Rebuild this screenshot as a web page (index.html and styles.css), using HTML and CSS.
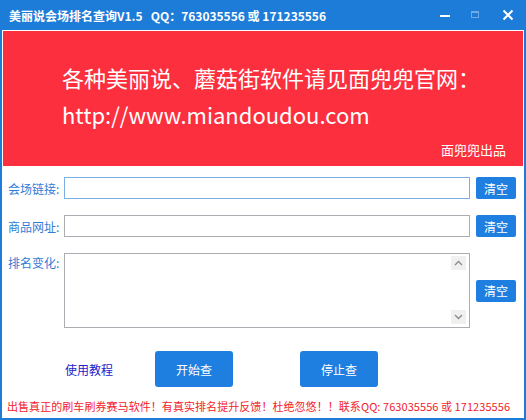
FILE: index.html
```html
<!DOCTYPE html>
<html lang="zh-CN">
<head>
<meta charset="utf-8">
<title>美丽说会场排名查询V1.5</title>
<link rel="stylesheet" href="styles.css">
</head>
<body>
<div class="window">
  <div class="titlebar">
    <span class="title">美丽说会场排名查询V1.5&nbsp;&nbsp;&nbsp;QQ：763035556 或 171235556</span>
    <div class="controls">
      <span class="ctl ctl-min"><svg width="12" height="12" viewBox="0 0 12 12"><rect x="1" y="6" width="10" height="2" fill="#fff"/></svg></span>
      <span class="ctl ctl-max"><svg width="12" height="12" viewBox="0 0 12 12"><rect x="2.5" y="2.5" width="7" height="6" fill="none" stroke="#6fa9e6" stroke-width="1"/><rect x="2.5" y="2.5" width="7" height="1.5" fill="#6fa9e6"/></svg></span>
      <span class="ctl ctl-close"><svg width="12" height="12" viewBox="0 0 12 12"><path d="M1.5 1.5 L10.5 10.5 M10.5 1.5 L1.5 10.5" stroke="#fff" stroke-width="2" fill="none"/></svg></span>
    </div>
  </div>
  <div class="client">
    <div class="banner">
      <div class="banner-line">各种美丽说、蘑菇街软件请见面兜兜官网：</div>
      <div class="banner-line">http://www.miandoudou.com</div>
      <div class="banner-credit">面兜兜出品</div>
    </div>
    <div class="form">
      <label class="label">会场链接:</label>
      <div class="field field-focus"></div>
      <button class="btn-clear">清空</button>

      <label class="label">商品网址:</label>
      <div class="field"></div>
      <button class="btn-clear">清空</button>

      <label class="label label-top">排名变化:</label>
      <div class="field area">
        <div class="scroll">
          <span class="arrow"><svg width="9" height="6" viewBox="0 0 9 6"><path d="M1 5 L4.5 1.5 L8 5" stroke="#8a8a8a" stroke-width="1.3" fill="none"/></svg></span>
          <span class="arrow"><svg width="9" height="6" viewBox="0 0 9 6"><path d="M1 1 L4.5 4.5 L8 1" stroke="#8a8a8a" stroke-width="1.3" fill="none"/></svg></span>
        </div>
      </div>
      <button class="btn-clear">清空</button>
    </div>
    <div class="actions">
      <a class="help">使用教程</a>
      <button class="btn-big">开始查</button>
      <button class="btn-big">停止查</button>
    </div>
    <div class="footer">出售真正的刷车刷券赛马软件！有真实排名提升反馈！杜绝忽悠！！联系QQ: 763035556 或 171235556</div>
  </div>
</div>
</body>
</html>
```
FILE: styles.css
```css
html, body {
  margin: 0;
  padding: 0;
}
body {
  width: 526px;
  height: 420px;
  overflow: hidden;
  font-family: "Noto Sans CJK SC", "Noto Sans", sans-serif;
}
.window {
  width: 526px;
  height: 420px;
  box-sizing: border-box;
  background: #1c7cd8;
  padding: 0 2px 2px;
  display: flex;
  flex-direction: column;
}
.titlebar {
  height: 30px;
  flex: none;
  display: flex;
  align-items: center;
  color: #fff;
}
.title {
  padding-left: 7px;
  font-size: 12px;
  font-weight: bold;
  white-space: nowrap;
}
.controls {
  margin-left: auto;
  display: flex;
  height: 30px;
}
.ctl {
  display: flex;
  align-items: center;
  justify-content: center;
}
.ctl-min { width: 26px; }
.ctl-max { width: 33px; }
.ctl-close { width: 33px; }
.client {
  flex: 1;
  background: #fff;
  padding: 1px;
  display: flex;
  flex-direction: column;
}
.banner {
  height: 135px;
  flex: none;
  box-sizing: border-box;
  background: #fc2f3e;
  color: #fff;
  padding: 28px 17px 0 59px;
}
.banner-line {
  font-size: 22px;
  line-height: 37px;
  white-space: nowrap;
}
.banner-credit {
  margin-top: 7px;
  font-size: 13px;
  line-height: 20px;
  text-align: right;
}
.form {
  display: grid;
  grid-template-columns: 50px 406px 40px;
  grid-template-rows: 22px 22px 75px;
  column-gap: 6px;
  row-gap: 16px;
  padding: 11px 0 0 5px;
  align-items: center;
}
.label {
  font-size: 12px;
  color: #2f7dd6;
  white-space: nowrap;
}
.label-top {
  align-self: start;
  padding-top: 1px;
}
.field {
  height: 22px;
  box-sizing: border-box;
  border: 1px solid #abadb3;
  background: #fff;
}
.field-focus {
  border-color: #7aaee4;
}
.area {
  height: 75px;
  display: flex;
  justify-content: flex-end;
}
.scroll {
  width: 17px;
  display: flex;
  flex-direction: column;
  justify-content: space-between;
  padding: 2px 1px 3px 0;
}
.arrow {
  width: 15px;
  height: 14px;
  background: #f0f0f0;
  display: flex;
  align-items: center;
  justify-content: center;
}
.btn-clear {
  height: 22px;
  width: 40px;
  border: none;
  border-radius: 2px;
  background: #1f7fe0;
  color: #fff;
  font-family: "Noto Sans CJK SC", sans-serif;
  font-size: 12px;
  padding: 0;
}
.actions {
  display: flex;
  align-items: center;
  margin-top: 23px;
  padding-left: 62px;
}
.help {
  width: 90px;
  font-size: 12px;
  color: #2222cc;
}
.btn-big {
  width: 78px;
  height: 36px;
  border: none;
  border-radius: 3px;
  background: #1f7fe0;
  color: #fff;
  font-family: "Noto Sans CJK SC", sans-serif;
  font-size: 12px;
  padding: 0;
}
.btn-big + .btn-big {
  margin-left: 67px;
}
.footer {
  margin-top: 11px;
  padding-left: 4px;
  font-size: 11px;
  letter-spacing: 0.06px;
  line-height: 16px;
  color: #f2222a;
  white-space: nowrap;
}
```
